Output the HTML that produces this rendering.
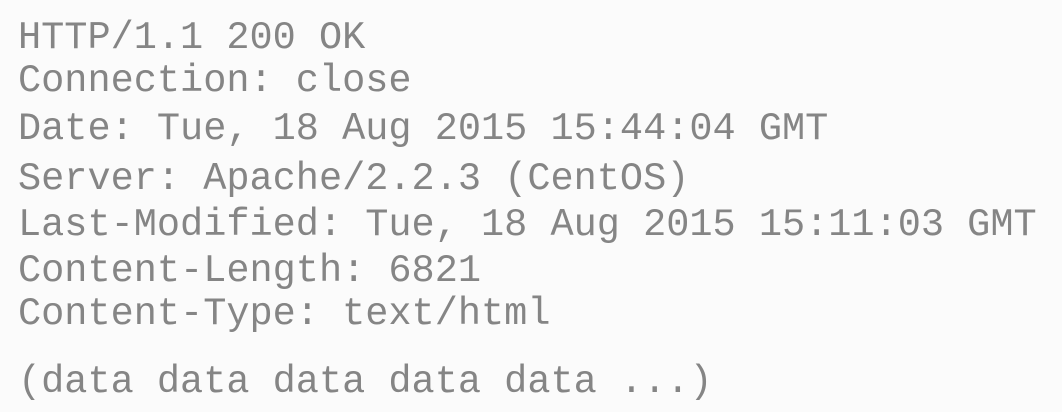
<!DOCTYPE html>
<html><head><style>
body{margin:0;width:1062px;height:412px;background:#fbfbfb;overflow:hidden;position:relative}
div{position:absolute;left:18px;font-family:"Liberation Mono",monospace;font-size:38.6px;color:#858585;white-space:pre;line-height:1}
</style></head><body>
<div style="top:19px">HTTP/1.1 200 OK</div>
<div style="top:62px">Connection: close</div>
<div style="top:110px">Date: Tue, 18 Aug 2015 15:44:04 GMT</div>
<div style="top:160px">Server: Apache/2.2.3 (CentOS)</div>
<div style="top:206px">Last-Modified: Tue, 18 Aug 2015 15:11:03 GMT</div>
<div style="top:252px">Content-Length: 6821</div>
<div style="top:295px">Content-Type: text/html</div>
<div style="top:363px">(data data data data data ...)</div>
</body></html>
